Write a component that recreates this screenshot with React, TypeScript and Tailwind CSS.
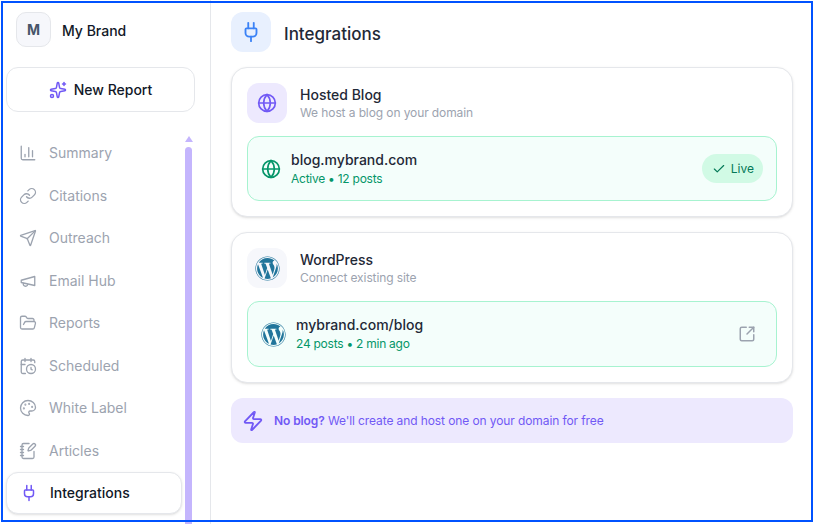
import React from "react";
import {
  ChartColumn,
  Check,
  CalendarClock,
  FolderOpen,
  Globe,
  Link,
  NotebookPen,
  Palette,
  Plug,
  Send,
  Sparkles,
  SquareArrowOutUpRight,
  Zap,
} from "lucide-react";
import { FaWordpress } from "react-icons/fa";

const MegaphoneIcon = ({ className, strokeWidth }: { className?: string; strokeWidth?: number }) => (
  <svg
    viewBox="0 0 24 24"
    fill="none"
    stroke="currentColor"
    strokeWidth={strokeWidth}
    strokeLinecap="round"
    strokeLinejoin="round"
    className={className}
  >
    <path d="m3 11 18-5v12L3 14v-3z" />
    <path d="M11.6 16.8a3 3 0 1 1-5.8-1.6" />
  </svg>
);

const navItems = [
  { label: "Summary", icon: ChartColumn },
  { label: "Citations", icon: Link },
  { label: "Outreach", icon: Send },
  { label: "Email Hub", icon: MegaphoneIcon },
  { label: "Reports", icon: FolderOpen },
  { label: "Scheduled", icon: CalendarClock },
  { label: "White Label", icon: Palette },
  { label: "Articles", icon: NotebookPen },
];

const Sidebar = () => (
  <aside className="w-[211px] shrink-0 border-r border-[#e5e7eb] flex flex-col">
    <div className="shrink-0 flex items-start gap-[11px] pl-4 pt-3 h-[67px]">
      <div className="w-[35px] h-[35px] rounded-[10px] bg-[#f6f7fb] border border-[#e5e7eb] flex items-center justify-center text-sm font-bold text-[#475569]">
        M
      </div>
      <span className="text-sm font-medium text-[#111827] h-[35px] leading-[37px]">My Brand</span>
    </div>
    <div className="shrink-0 pl-1.5 pr-[15px]">
      <button className="w-full h-[45px] rounded-xl bg-white border border-[#e5e7eb] flex items-center justify-center gap-[7px] text-sm font-medium text-[#111827]">
        <Sparkles className="w-[18px] h-[18px] text-[#7159f5]" />
        New Report
      </button>
    </div>
    <div className="flex pl-1.5 pt-5">
      <nav className="w-[176px] shrink-0 flex flex-col">
        {navItems.map(({ label, icon: Icon }) => (
          <div key={label} className="h-[42.5px] flex items-center pl-[13px] gap-3 text-sm text-[#9ca3af]">
            <Icon className="w-[18px] h-[18px] shrink-0" strokeWidth={1.75} />
            {label}
          </div>
        ))}
        <div className="h-[42px] shrink-0 rounded-xl bg-white border border-[#e5e7eb] shadow-sm flex items-center pl-[13px] gap-3 text-sm font-medium text-[#111827]">
          <Plug className="w-[18px] h-[18px] shrink-0 text-[#7159f5]" />
          Integrations
        </div>
      </nav>
      <div className="ml-[3px] mt-1 w-[7px] flex flex-col items-center">
        <div className="w-0 h-0 border-x-[4px] border-x-transparent border-b-[6px] border-b-[#c4b5fd]" />
        <div className="mt-[5px] w-[7px] h-[400px] rounded-t-full bg-[#c4b5fd]" />
      </div>
    </div>
  </aside>
);

interface CardProps {
  icon: React.ReactNode;
  iconBg: string;
  title: string;
  subtitle: string;
  boxHeight: string;
  children: React.ReactNode;
}

const Card = ({ icon, iconBg, title, subtitle, boxHeight, children }: CardProps) => (
  <section className="rounded-2xl border border-[#e5e7eb] bg-white shadow-sm p-[15px]">
    <div className="flex items-center gap-[13px]">
      <div className={`w-10 h-10 rounded-xl flex items-center justify-center ${iconBg}`}>{icon}</div>
      <div>
        <div className="text-sm font-medium leading-5 text-[#1f2937]">{title}</div>
        <div className="text-xs leading-4 tracking-[-0.1px] text-[#9ca3af]">{subtitle}</div>
      </div>
    </div>
    <div className={`mt-[13px] rounded-xl border border-[#a7f3d0] bg-[#f4fefb] flex items-center px-[13px] ${boxHeight}`}>
      {children}
    </div>
  </section>
);

export default function App() {
  return (
    <div className="relative w-[814px] h-[524px] overflow-hidden bg-white flex font-['Inter',sans-serif]">
      <Sidebar />
      <main className="flex-1 pt-3 pl-5 pr-[21px]">
        <header className="flex items-center gap-[13px] h-10">
          <div className="w-10 h-10 rounded-xl bg-[#e8f0fe] flex items-center justify-center">
            <Plug className="w-[22px] h-[22px] text-[#3b82f6]" />
          </div>
          <h1 className="mt-[5px] text-[17px] font-medium text-[#1f2937]">Integrations</h1>
        </header>

        <div className="mt-[15px] flex flex-col gap-[15px]">
          <Card
            icon={<Globe className="w-5 h-5 text-[#7159f5]" />}
            iconBg="bg-[#ede9fe]"
            title="Hosted Blog"
            subtitle="We host a blog on your domain"
            boxHeight="h-[65px]"
          >
            <Globe className="w-5 h-5 text-[#059669] shrink-0" />
            <div className="ml-[10px]">
              <div className="mb-[2px] text-sm font-medium leading-[18px] text-[#1f2937]">blog.mybrand.com</div>
              <div className="text-xs leading-4 tracking-[-0.25px] text-[#059669]">Active • 12 posts</div>
            </div>
            <div className="ml-auto h-[29px] rounded-full bg-[#d1fae5] flex items-center gap-[5px] pl-[10px] pr-[9px] text-xs text-[#047857]">
              <Check className="w-[14px] h-[14px]" />
              Live
            </div>
          </Card>

          <Card
            icon={<FaWordpress className="w-[25px] h-[25px] text-[#21759b]" />}
            iconBg="bg-[#f6f7fb]"
            title="WordPress"
            subtitle="Connect existing site"
            boxHeight="h-[66px]"
          >
            <FaWordpress className="w-[25px] h-[25px] text-[#21759b] shrink-0" />
            <div className="ml-[10px]">
              <div className="mb-[2px] text-sm font-medium leading-[18px] text-[#1f2937]">mybrand.com/blog</div>
              <div className="text-xs leading-4 tracking-[-0.25px] text-[#059669]">24 posts • 2 min ago</div>
            </div>
            <SquareArrowOutUpRight className="ml-auto mr-[7px] w-[18px] h-[18px] text-[#9ca3af]" />
          </Card>

          <div className="h-[45px] rounded-xl bg-[#ede9fe] flex items-center pl-[11px] gap-[10px] text-xs text-[#7159f5]">
            <Zap className="w-[22px] h-[22px]" />
            <p className="tracking-[-0.1px]">
              <span className="font-semibold">No blog?</span> We'll create and host one on your domain for free
            </p>
          </div>
        </div>
      </main>
      <div className="absolute left-px top-px w-[812px] h-[521px] border-2 border-[#0052ff] pointer-events-none" />
    </div>
  );
}
